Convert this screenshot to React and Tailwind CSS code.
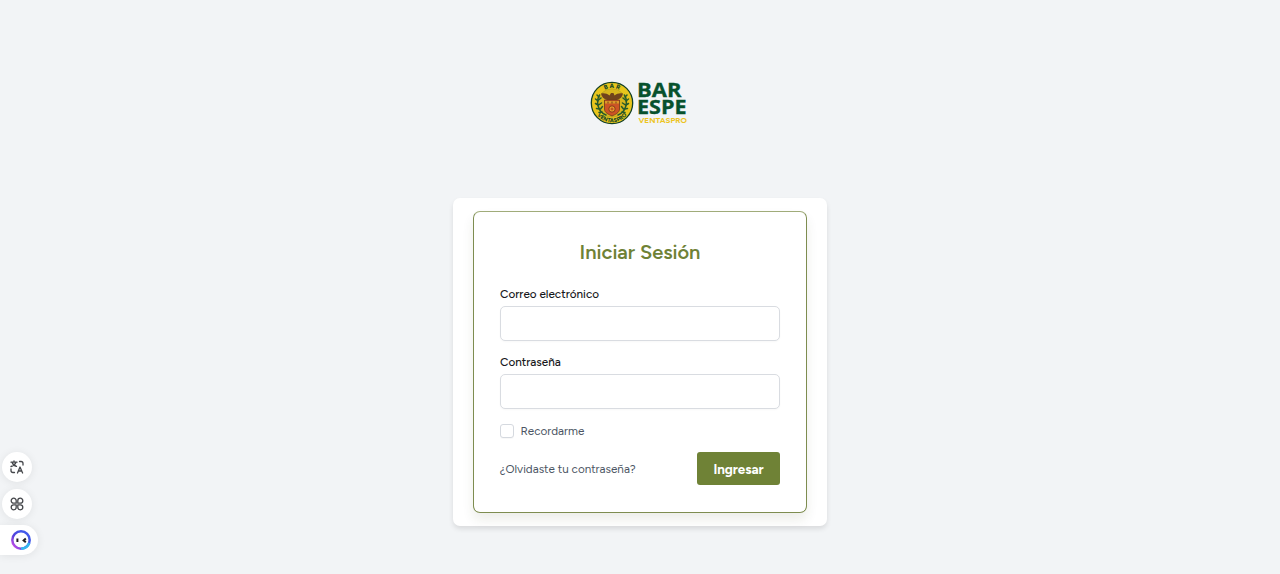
import React from 'react';

function Emblem() {
  return (
    <svg viewBox="0 0 44 44" className="h-11 w-11 shrink-0" aria-hidden="true">
      <defs>
        <path id="arcTop" d="M7 22 A15 15 0 0 1 37 22" />
        <path id="arcBottom" d="M2.8 22 A19.2 19.2 0 0 0 41.2 22" />
      </defs>
      <circle cx="22" cy="22" r="20.7" fill="#e8c51c" stroke="#123f26" strokeWidth="1.3" />
      <circle cx="22" cy="22" r="14.2" fill="#d8b61d" stroke="#a89b20" strokeWidth=".5" />
      <g fill="none" stroke="#285b2b" strokeWidth="1.5" strokeLinecap="round">
        <path d="M9.500 14C5.500 21 8 31 16 34M34.500 14C38.500 21 36 31 28 34" />
        <path d="M9 16l-2-2M8 20l-2.500-2M8 24l-2.500-1.500M9.500 28l-3-.5M12 31l-3 .5M8.500 19l2.500-2M8.500 24l3-2M10.500 28l2-2.500M35 16l2-2M36 20l2.500-2M36 24l2.500-1.500M34.500 28l3-.5M32 31l3 .5M35.500 19L33 17M35.500 24l-3-2M33.500 28l-2-2.500" />
      </g>
      <path d="M11 12.500c3.500-.5 6 0 8.500 2l1.500-2.500h2.500l1 2.500c2.500-2 5-2.500 8.500-2-.5 3.500-3 5.500-6 6.500H17c-3-1-5.500-3-6-6.500z" fill="#71431c" />
      <path d="M14.500 19h15v9c0 4-4.500 5.500-7.500 7-3-1.500-7.500-3-7.500-7z" fill="#cc5425" stroke="#6e391c" strokeWidth=".8" />
      <path d="M15 20h14v2.500H15z" fill="#dc9a28" />
      <path d="M18 20.500v2M22 20.500v2M26 20.500v2" stroke="#793c1d" />
      <circle cx="22" cy="28" r="3.200" fill="#e7a12a" stroke="#88361c" />
      <path d="M20.500 28h3M22 26.500v3" stroke="#b33c22" />
      <text fontFamily="Figtree, sans-serif" fontWeight="800" fontSize="6.300" fill="#174827">
        <textPath href="#arcTop" startOffset="50%" textAnchor="middle" textLength="15">BAR</textPath>
      </text>
      <text fontFamily="Figtree, sans-serif" fontWeight="800" fontSize="5.600" fill="#174827">
        <textPath href="#arcBottom" startOffset="50%" textAnchor="middle" textLength="34">VENTASPRO</textPath>
      </text>
    </svg>
  );
}

function Logo() {
  return (
    <div className="flex h-11 w-[100px]">
      <Emblem />
      <svg viewBox="0 0 56 44" className="h-11 w-14 shrink-0 overflow-visible">
        <g fontFamily="Open Sans, sans-serif" fontWeight="700" fill="#07512d" stroke="#07512d" strokeWidth=".35">
          <text x="3" y="15.600" fontSize="20" textLength="44.500" lengthAdjust="spacingAndGlyphs">BAR</text>
          <text x="3" y="33" fontSize="20" textLength="49.500" lengthAdjust="spacingAndGlyphs">ESPE</text>
        </g>
        <text x="4.500" y="41.800" fontFamily="Figtree, sans-serif" fontWeight="700" fontSize="7.500" textLength="48.500" lengthAdjust="spacingAndGlyphs" fill="#edc41f">VENTASPRO</text>
      </svg>
    </div>
  );
}

function Field({ label, type }) {
  return (
    <label className="block">
      <span className="block h-[17px] text-[11.7px] leading-[17px] font-medium text-[#18191c]">{label}</span>
      <input type={type} className="mt-[3px] block h-[35px] w-full rounded-[5px] border border-[#d9dce1] bg-white px-3 text-sm shadow-[0_1px_2px_rgba(0,0,0,0.03)] outline-none focus:border-[#6f8236]" />
    </label>
  );
}

function FloatingTools() {
  return (
    <aside className="absolute left-0 top-[452px] flex flex-col">
      <button aria-label="Traducir" className="ml-0.5 flex h-[30px] w-[30px] items-center justify-center rounded-full bg-white shadow-[0_1px_8px_rgba(0,0,0,0.08)]">
        <svg viewBox="0 0 16 16" className="h-4 w-4" fill="none" stroke="#45474b" strokeWidth="1.300" strokeLinecap="round" strokeLinejoin="round">
          <path d="M2 3.200h6M5 1.800v1.400M3 3.200C4 5.800 5.500 6.800 7.500 7.300M7 3.200C6 5.800 4.200 7 2 7.500M10.500 2.500H12c1.400 0 2 .6 2 2V6M2 10v1.500c0 1.400.6 2 2 2h1.500M8.500 14l2.500-6 2.600 6M9.400 12h3.400" />
        </svg>
      </button>
      <button aria-label="Comandos" className="ml-0.5 mt-[7px] flex h-[30px] w-[30px] items-center justify-center rounded-full bg-white shadow-[0_1px_8px_rgba(0,0,0,0.08)]">
        <svg viewBox="0 0 16 16" className="h-4 w-4" fill="none" stroke="#45474b" strokeWidth="1.300" strokeLinejoin="round">
          <path d="M7.200 7.200H4.700a2.500 2.500 0 1 1 2.500-2.500zM8.800 7.200V4.700a2.500 2.500 0 1 1 2.500 2.500zM7.200 8.800v2.500a2.500 2.500 0 1 1-2.500-2.500zM8.800 8.800h2.500a2.500 2.500 0 1 1-2.500 2.500z" />
        </svg>
      </button>
      <button aria-label="Asistente" className="mt-[6px] flex h-[30px] w-[38px] items-center justify-end rounded-r-full bg-white pr-[7px] shadow-[0_1px_8px_rgba(0,0,0,0.08)]">
        <svg viewBox="0 0 20 20" className="h-5 w-5" fill="none">
          <defs>
            <linearGradient id="ring" x1="3" y1="17" x2="15" y2="7" gradientUnits="userSpaceOnUse">
              <stop stopColor="#c04be6" /><stop offset=".45" stopColor="#5342dc" /><stop offset="1" stopColor="#4259ea" />
            </linearGradient>
          </defs>
          <circle cx="10" cy="10" r="8.700" fill="#fff" stroke="url(#ring)" strokeWidth="2.500" />
          <path d="M10 18.700A8.700 8.700 0 0 0 18.200 13" stroke="#35b8ef" strokeWidth="2.500" />
          <path d="M6.400 8.500v3.500M14.800 8.400l-2.200 2 2.200 1.900" stroke="#202124" strokeWidth="2" />
        </svg>
      </button>
    </aside>
  );
}

export default function App() {
  return (
    <main className="relative flex h-[574px] w-full flex-col items-center overflow-hidden bg-[#f2f4f6] pt-[81px] font-['Figtree',Inter,sans-serif]">
      <Logo />
      <section className="mt-[73px] h-[328px] w-[374px] rounded-[7px] bg-white px-5 pt-[13px] shadow-[0_3px_5px_rgba(0,0,0,0.10)]">
        <form onSubmit={(event) => event.preventDefault()} className="h-[302px] w-[334px] rounded-[7px] border border-[#7e8d50] border-t-[#a0ac7a] bg-white px-[26px] pt-[26px] shadow-[0_7px_12px_rgba(55,65,25,0.09)]">
          <h1 className="text-center text-[20.1px] leading-[28px] font-semibold tracking-[-0.04px] text-[#6f8236]">Iniciar Sesión</h1>
          <div className="mt-5 flex flex-col gap-[13px]">
            <Field label="Correo electrónico" type="email" />
            <Field label="Contraseña" type="password" />
          </div>
          <label className="mt-[13px] flex h-[17px] items-center gap-[6.500px] text-[11.7px] leading-[17px] text-[#4b5563]">
            <input type="checkbox" className="h-[14px] w-[14px] appearance-none rounded-[3px] border border-[#d5d9df] bg-white shadow-[0_1px_1px_rgba(0,0,0,0.03)] checked:bg-[#6f8236]" />
            <span className="pt-px">Recordarme</span>
          </label>
          <div className="mt-[13px] flex h-[33px] items-center justify-between">
            <a href="#" className="pt-[2px] text-[11.7px] text-[#4b5563]">¿Olvidaste tu contraseña?</a>
            <button className="h-[33.500px] w-[83px] rounded-[3px] bg-[#6f8236] pt-px text-[13.4px] font-bold tracking-[-0.05px] text-white">Ingresar</button>
          </div>
        </form>
      </section>
      <FloatingTools />
    </main>
  );
}
